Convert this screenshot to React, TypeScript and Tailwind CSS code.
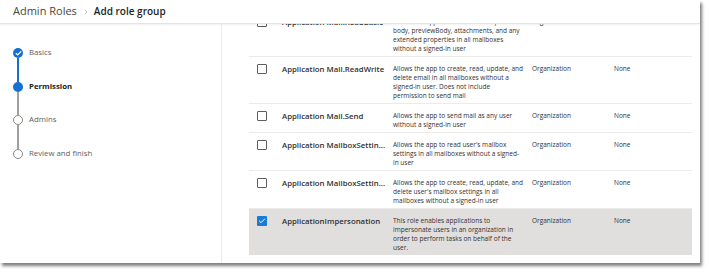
import { Check, ChevronRight } from "lucide-react";

type Row = {
  name: string;
  lines: string[];
  checked?: boolean;
};

const rows: Row[] = [
  {
    name: "Application Mail.ReadBasic",
    lines: [
      "Allows the app to read email except the",
      "body, previewBody, attachments, and any",
      "extended properties in all mailboxes",
      "without a signed-in user",
    ],
  },
  {
    name: "Application Mail.ReadWrite",
    lines: [
      "Allows the app to create, read, update, and",
      "delete email in all mailboxes without a",
      "signed-in user. Does not include",
      "permission to send mail",
    ],
  },
  {
    name: "Application Mail.Send",
    lines: ["Allows the app to send mail as any user", "without a signed-in user"],
  },
  {
    name: "Application MailboxSettin...",
    lines: [
      "Allows the app to read user's mailbox",
      "settings in all mailboxes without a signed-",
      "in user",
    ],
  },
  {
    name: "Application MailboxSettin...",
    lines: [
      "Allows the app to create, read, update, and",
      "delete user's mailbox settings in all",
      "mailboxes without a signed-in user",
    ],
  },
  {
    name: "ApplicationImpersonation",
    checked: true,
    lines: [
      "This role enables applications to",
      "impersonate users in an organization in",
      "order to perform tasks on behalf of the",
      "user.",
    ],
  },
];

const steps = [
  { label: "Basics", state: "done" },
  { label: "Permission", state: "current" },
  { label: "Admins", state: "todo" },
  { label: "Review and finish", state: "todo" },
];

function StepDot({ state }: { state: string }) {
  if (state === "done") {
    return (
      <div className="w-[10px] h-[10px] rounded-full bg-[#1570cf] flex items-center justify-center">
        <Check className="w-[7px] h-[7px] text-white" strokeWidth={4} />
      </div>
    );
  }
  if (state === "current") {
    return <div className="w-[10px] h-[10px] rounded-full bg-[#1570cf]" />;
  }
  return <div className="w-[10px] h-[10px] rounded-full border border-[#8a8886] bg-white" />;
}

export default function App() {
  return (
    <div className="w-[709px] h-[272px] bg-white font-['Open_Sans',sans-serif] text-[#323130]">
      <div className="w-[700px] h-[263px] bg-white flex flex-col shadow-[2px_3px_3px_rgba(0,0,0,0.5)]">
        {/* Header */}
        <div className="h-[24px] shrink-0 flex items-center pl-[13px] border-b border-[#e6e4e2] relative z-10 bg-white shadow-[0_1px_2px_rgba(0,0,0,0.06)]">
          <span className="text-[11px] text-[#484644]">Admin Roles</span>
          <ChevronRight className="w-[8px] h-[8px] text-[#a19f9d] ml-[5px] mr-[4px]" strokeWidth={2} />
          <span className="text-[10px] font-semibold text-[#201f1e]">Add role group</span>
        </div>

        <div className="flex flex-1 min-h-0">
          {/* Stepper */}
          <div className="w-[222px] shrink-0 border-r border-[#edebe9] pt-[24px] pl-[13px]">
            {steps.map((s, i) => (
              <div key={s.label}>
                <div className="flex items-center h-[10px]">
                  <StepDot state={s.state} />
                  <span
                    className={
                      "ml-[6px] text-[7.8px] leading-none " +
                      (s.state === "current" ? "font-bold text-[#201f1e]" : "text-[#605e5c]")
                    }
                  >
                    {s.label}
                  </span>
                </div>
                {i < steps.length - 1 && (
                  <div
                    className={
                      "ml-[4.25px] w-[1.5px] h-[23.5px] " +
                      (i === 0 ? "bg-[#1570cf]" : "bg-[#a19f9d]")
                    }
                  />
                )}
              </div>
            ))}
          </div>

          {/* Table */}
          <div className="flex-1 overflow-hidden pl-[27px] pr-[8px]">
            <div className="-mt-[14px]">
              {rows.map((r, i) => (
                <div
                  key={i}
                  className={
                    "flex items-start pt-[7px] pb-[3px] " +
                    (r.checked ? "bg-[#e1dfdd]" : "border-b border-[#edebe9]")
                  }
                >
                  <div className="w-[33px] shrink-0 pl-[8px]">
                    {r.checked ? (
                      <div className="w-[10px] h-[10px] rounded-[1px] bg-[#1a7bd6] flex items-center justify-center">
                        <Check className="w-[8px] h-[8px] text-white" strokeWidth={3} />
                      </div>
                    ) : (
                      <div className="w-[10px] h-[10px] rounded-[1px] border border-[#605e5c] bg-white" />
                    )}
                  </div>
                  <div className="w-[111px] shrink-0 text-[7.8px] leading-[10px] font-semibold text-[#323130] whitespace-nowrap">
                    {r.name}
                  </div>
                  <div className="w-[139px] shrink-0 text-[6.5px] leading-[9px] text-[#323130]">
                    {r.lines.map((l) => (
                      <div key={l} className="whitespace-nowrap">
                        {l}
                      </div>
                    ))}
                  </div>
                  <div className="w-[82px] shrink-0 text-[6.5px] leading-[9px]">Organization</div>
                  <div className="text-[6.5px] leading-[9px]">None</div>
                </div>
              ))}
            </div>
          </div>
        </div>
      </div>
    </div>
  );
}
